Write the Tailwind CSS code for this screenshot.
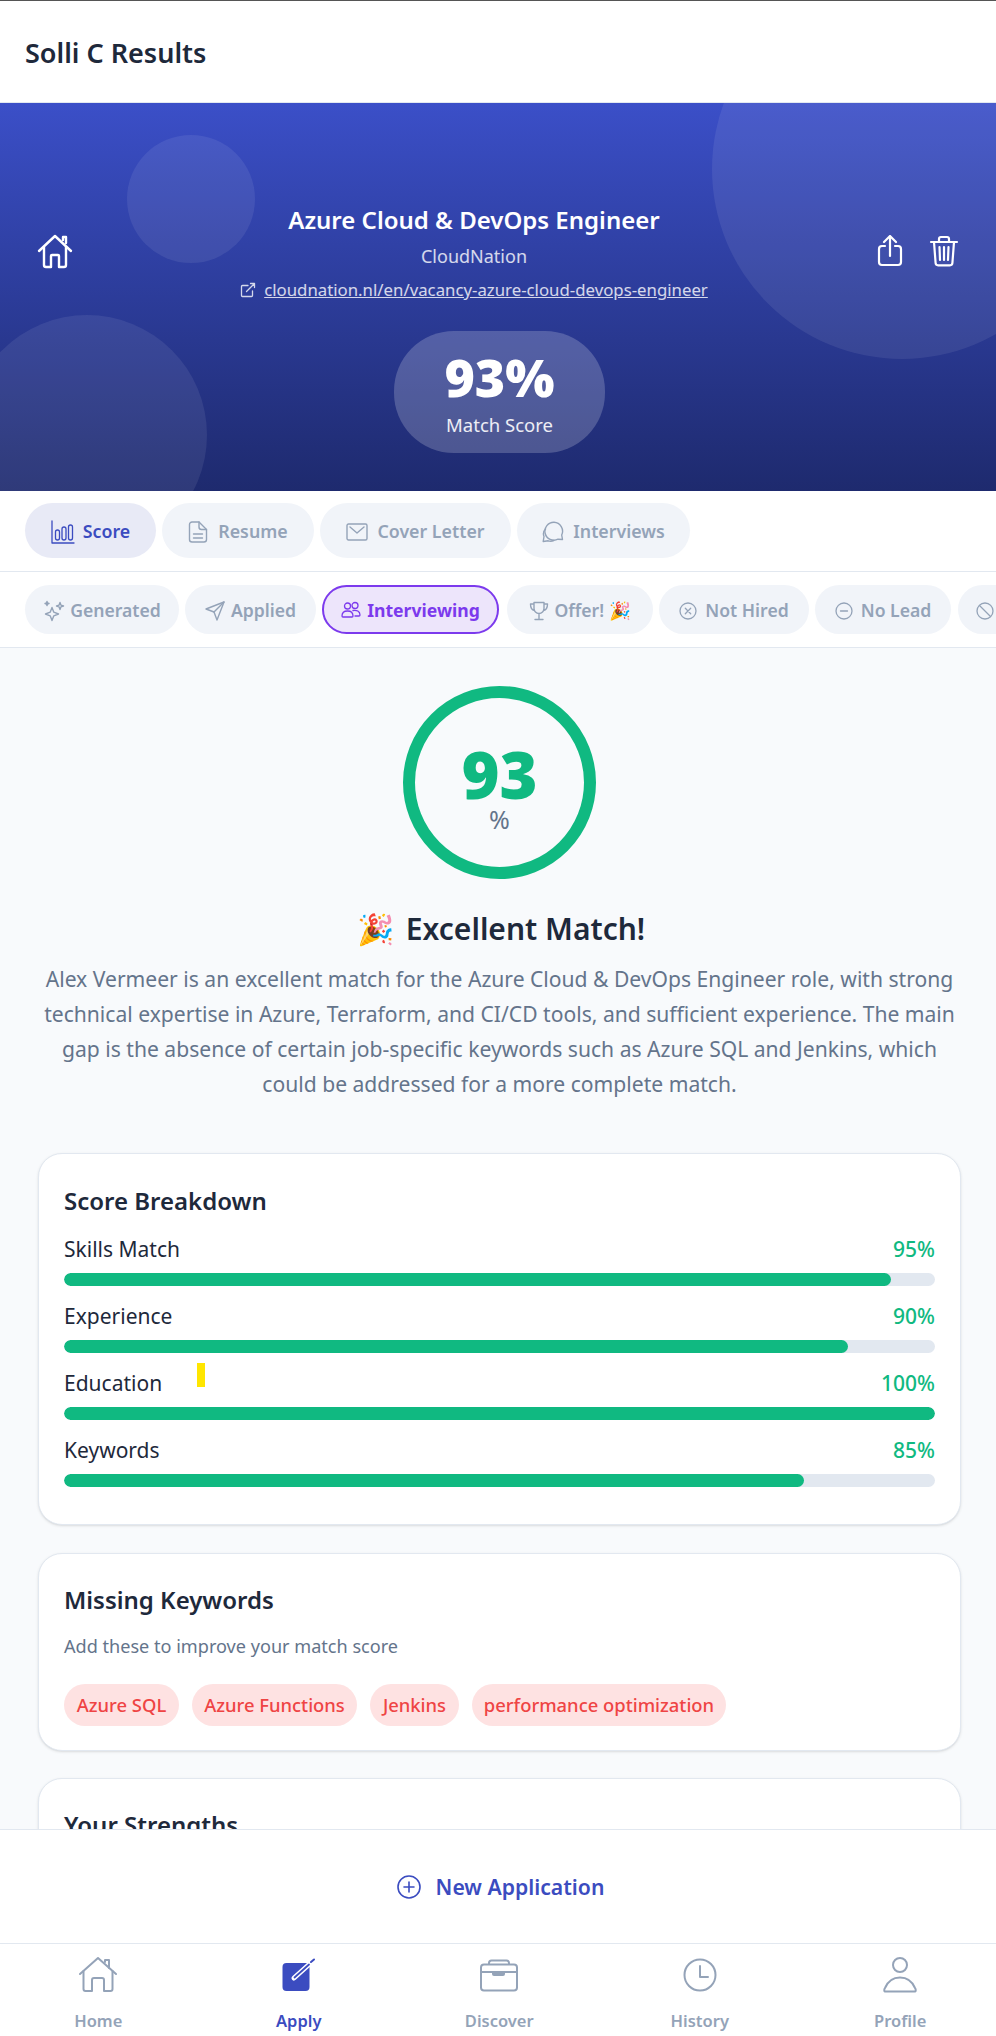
<!DOCTYPE html>
<html lang="en">
<head>
<meta charset="utf-8">
<title>Solli C Results</title>
<script src="https://cdn.jsdelivr.net/npm/@tailwindcss/browser@4"></script>
</head>
<body class="bg-white">
<div class="relative flex flex-col h-[2036px] w-[996px] overflow-hidden bg-[#f8fafc] font-['Noto_Sans',sans-serif] text-[#1e293b]">

  <header class="shrink-0 h-[103px] bg-white border-t border-t-[#555] border-b border-b-[#e2e8f0] flex items-center pl-[25px] pt-[2px]">
    <h1 class="text-[27px] font-semibold leading-none text-[#1e293b]">Solli C Results</h1>
  </header>

  <section class="relative shrink-0 h-[388px] overflow-hidden bg-gradient-to-b from-[#3b4fc8] to-[#1e2a6e] text-white">
    <div class="absolute w-[380px] h-[380px] left-[712px] top-[-124px] rounded-full bg-white/[0.08]"></div>
    <div class="absolute w-[128px] h-[128px] left-[127px] top-[32px] rounded-full bg-white/[0.08]"></div>
    <div class="absolute w-[240px] h-[240px] left-[-33px] top-[212px] rounded-full bg-white/[0.08]"></div>
    <div class="relative pt-[100px] px-[36px] flex items-center h-[200px]">
      <svg class="w-[38px] h-[38px] shrink-0 -mt-[5px]" viewBox="0 0 38 38" fill="none" stroke="currentColor" stroke-width="2.4" stroke-linecap="round" stroke-linejoin="round"><path d="M3 19 19 4l16 15"/><path d="M8 15v18a2 2 0 0 0 2 2h5V24a1 1 0 0 1 1-1h6a1 1 0 0 1 1 1v11h5a2 2 0 0 0 2-2V15"/><path d="M27 8V5h3v6"/></svg>
      <div class="flex-1 min-w-0 text-center">
        <h2 class="text-[24px] leading-[30px] font-semibold">Azure Cloud &amp; DevOps Engineer</h2>
        <p class="mt-[9px] text-[18px] leading-[24px] text-white/80">CloudNation</p>
        <p class="mt-[11px] flex items-center justify-center gap-[8px] text-[16.800px] leading-[22px] text-white/80">
          <svg class="w-[16px] h-[16px]" viewBox="0 0 16 16" fill="none" stroke="currentColor" stroke-width="1.3" stroke-linecap="round" stroke-linejoin="round"><path d="M12.5 9v4.5a1 1 0 0 1-1 1h-9a1 1 0 0 1-1-1v-9a1 1 0 0 1 1-1H8"/><path d="M6.5 9.5 14.5 1.5M10.5 1.5h4v4"/></svg>
          <span class="underline">cloudnation.nl/en/vacancy-azure-cloud-devops-engineer</span>
        </p>
      </div>
      <div class="flex shrink-0 gap-[22px] -mt-[5px]">
        <svg class="w-[32px] h-[32px]" viewBox="0 0 32 32" fill="none" stroke="currentColor" stroke-width="2.2" stroke-linecap="round" stroke-linejoin="round"><path d="M11 11H8a3 3 0 0 0-3 3v13a3 3 0 0 0 3 3h16a3 3 0 0 0 3-3V14a3 3 0 0 0-3-3h-3"/><path d="M16 21V2M10 7l6-6 6 6"/></svg>
        <svg class="w-[32px] h-[32px]" viewBox="0 0 32 32" fill="none" stroke="currentColor" stroke-width="2.2" stroke-linecap="round" stroke-linejoin="round"><path d="M3 7h26M6 7l1.600 21a2.500 2.500 0 0 0 2.500 2.300h11.800a2.500 2.500 0 0 0 2.500-2.300L26 7"/><path d="M11 7V4a2 2 0 0 1 2-2h6a2 2 0 0 1 2 2v3M11.500 12l.5 13M16 12v13M20.500 12l-.5 13"/></svg>
      </div>
    </div>
    <div class="relative ml-[394px] mt-[28px] w-[211px] h-[122px] rounded-[60px] bg-white/20 flex flex-col items-center justify-center">
      <div class="text-[52px] leading-[60px] font-black">93%</div>
      <div class="mt-[6px] text-[18.500px] leading-[24px] text-white/90">Match Score</div>
    </div>
  </section>

  <nav class="shrink-0 h-[81px] bg-white border-b border-[#e2e8f0] px-[25px] flex items-center gap-[6px] pb-[1px] text-[17.800px] font-semibold text-[#94a3b8]">
    <div class="w-[131px] h-[55px] pt-[2px] rounded-full bg-[#e8eaf6] text-[#3b4cc0] flex items-center justify-center gap-[8px]">
      <svg class="w-[24px] h-[24px]" viewBox="0 0 24 24" fill="none" stroke="currentColor" stroke-width="1.300" stroke-linecap="round" stroke-linejoin="round"><path d="M1 1v22h22"/><rect x="4.500" y="10" width="4" height="10" rx="2"/><rect x="11" y="7" width="4" height="13" rx="2"/><rect x="17.500" y="5" width="4" height="15" rx="2"/></svg>
      <span>Score</span>
    </div>
    <div class="w-[152px] h-[55px] pt-[2px] rounded-full bg-[#f1f4f9] flex items-center justify-center gap-[10px]">
      <svg class="w-[20px] h-[24px]" viewBox="0 0 20 24" fill="none" stroke="currentColor" stroke-width="1.400" stroke-linecap="round" stroke-linejoin="round"><path d="M11 2H4a2.500 2.500 0 0 0-2.500 2.500v15A2.500 2.500 0 0 0 4 22h12a2.500 2.500 0 0 0 2.500-2.500V9.500z"/><path d="M11 2v5a2.500 2.500 0 0 0 2.500 2.500h5M5.500 14h9M5.500 18h9"/></svg>
      <span>Resume</span>
    </div>
    <div class="w-[191px] h-[55px] pt-[2px] rounded-full bg-[#f1f4f9] flex items-center justify-center gap-[9px]">
      <svg class="w-[22px] h-[18px]" viewBox="0 0 22 18" fill="none" stroke="currentColor" stroke-width="1.400" stroke-linecap="round" stroke-linejoin="round"><rect x="1" y="1" width="20" height="16" rx="1.500"/><path d="m4 4 7 6 7-6"/></svg>
      <span>Cover Letter</span>
    </div>
    <div class="w-[173px] h-[55px] pt-[2px] rounded-full bg-[#f1f4f9] flex items-center justify-center gap-[9px]">
      <svg class="w-[22px] h-[22px]" viewBox="0 0 22 22" fill="none" stroke="currentColor" stroke-width="1.400" stroke-linecap="round" stroke-linejoin="round"><path d="M12 1.200a9 9 0 1 0 4 17l4.500.3-.8-4.500A9 9 0 0 0 12 1.200z"/><path d="M3.500 8A7 7 0 0 0 2 15.500l-.8 5 5-.7a7 7 0 0 0 5.500-.3"/></svg>
      <span>Interviews</span>
    </div>
  </nav>

  <nav class="shrink-0 h-[76px] bg-white border-b border-[#e2e8f0] pl-[25px] flex items-center gap-[6px] overflow-hidden text-[17.600px] font-semibold text-[#94a3b8] whitespace-nowrap">
    <div class="shrink-0 w-[154px] h-[49px] pt-[2px] rounded-full bg-[#f1f4f9] flex items-center justify-center gap-[5px]">
      <svg class="w-[22px] h-[22px]" viewBox="0 0 22 22" fill="none" stroke="currentColor" stroke-width="1.400" stroke-linecap="round" stroke-linejoin="round"><path d="M9 7.500 10.800 12.200 15.500 14 10.800 15.800 9 20.500 7.200 15.800 2.500 14 7.200 12.200z"/><path d="M17 2.500l.9 2.600 2.600.9-2.600.9-.9 2.600-.9-2.600-2.600-.9 2.600-.9zM4 1.500l.5 1.500L6 3.500 4.500 4 4 5.500 3.500 4 2 3.500 3.500 3z"/></svg>
      <span>Generated</span>
    </div>
    <div class="shrink-0 w-[131px] h-[49px] pt-[2px] rounded-full bg-[#f1f4f9] flex items-center justify-center gap-[6px]">
      <svg class="w-[20px] h-[20px]" viewBox="0 0 20 20" fill="none" stroke="currentColor" stroke-width="1.400" stroke-linecap="round" stroke-linejoin="round"><path d="M1 8 19 1l-7 18-3-8z"/><path d="M9 11 19 1"/></svg>
      <span>Applied</span>
    </div>
    <div class="shrink-0 w-[177px] h-[49px] pt-[1px] rounded-full bg-[#ede5fb] border-2 border-[#7c3aed] text-[#7c3aed] flex items-center justify-center gap-[6px] font-bold">
      <svg class="w-[20px] h-[18px]" viewBox="0 0 20 18" fill="none" stroke="currentColor" stroke-width="1.300" stroke-linecap="round" stroke-linejoin="round"><circle cx="6.500" cy="5" r="3"/><circle cx="14" cy="4.500" r="3"/><path d="M1 15c0-3.500 2.500-5 5.500-5s5.500 1.500 5.500 5c0 .6-.4 1-1 1H2c-.6 0-1-.4-1-1z"/><path d="M12 9.500c3.500-.8 7 .8 7 4.500 0 .6-.4 1-1 1h-4"/></svg>
      <span>Interviewing</span>
    </div>
    <div class="shrink-0 ml-[2px] w-[146px] h-[49px] pt-[2px] rounded-full bg-[#f1f4f9] flex items-center justify-center gap-[5px]">
      <svg class="w-[20px] h-[20px]" viewBox="0 0 20 20" fill="none" stroke="currentColor" stroke-width="1.400" stroke-linecap="round" stroke-linejoin="round"><path d="M5 1.500h10v6a5 5 0 0 1-10 0zM5 3H1.500c0 4 1 6 4 6.500M15 3h3.500c0 4-1 6-4 6.500M10 12.500v5M6 18.500h8"/></svg>
      <span>Offer!&nbsp;🎉</span>
    </div>
    <div class="shrink-0 w-[150px] h-[49px] pt-[2px] rounded-full bg-[#f1f4f9] flex items-center justify-center gap-[8px]">
      <svg class="w-[18px] h-[18px]" viewBox="0 0 18 18" fill="none" stroke="currentColor" stroke-width="1.300" stroke-linecap="round" stroke-linejoin="round"><circle cx="9" cy="9" r="8"/><path d="m6.300 6.300 5.400 5.400m0-5.400-5.400 5.400"/></svg>
      <span>Not Hired</span>
    </div>
    <div class="shrink-0 w-[136px] h-[49px] pt-[2px] rounded-full bg-[#f1f4f9] flex items-center justify-center gap-[8px]">
      <svg class="w-[18px] h-[18px]" viewBox="0 0 18 18" fill="none" stroke="currentColor" stroke-width="1.300" stroke-linecap="round" stroke-linejoin="round"><circle cx="9" cy="9" r="8"/><path d="M5.500 9h7"/></svg>
      <span>No Lead</span>
    </div>
    <div class="shrink-0 ml-[1px] w-[120px] h-[49px] pt-[2px] rounded-full bg-[#f1f4f9] flex items-center pl-[18px] gap-[8px]">
      <svg class="w-[18px] h-[18px]" viewBox="0 0 18 18" fill="none" stroke="currentColor" stroke-width="1.300" stroke-linecap="round" stroke-linejoin="round"><circle cx="9" cy="9" r="8"/><path d="m3.500 3.500 11 11"/></svg>
    </div>
  </nav>

  <main class="flex-1 min-h-0 overflow-hidden pl-[38px] pr-[35px] pt-[38px]">
    <div class="mx-auto w-[193px] h-[193px] rounded-full border-[12px] border-[#10b981] flex flex-col items-center justify-center pt-[11px]">
      <div class="text-[65px] leading-[62px] font-black text-[#10b981]">93</div>
      <div class="text-[25px] leading-[28px] text-[#64748b]">%</div>
    </div>
    <h3 class="mt-[30px] pl-[3px] flex items-center justify-center gap-[12px] text-[30px] leading-[40px] font-semibold text-[#1e293b]"><span>🎉</span><span>Excellent Match!</span></h3>
    <p class="mt-[12px] text-center text-[21.100px] leading-[35px] text-[#64748b]">Alex Vermeer is an excellent match for the Azure Cloud &amp; DevOps Engineer role, with strong technical expertise in Azure, Terraform, and CI/CD tools, and sufficient experience. The main gap is the absence of certain job-specific keywords such as Azure SQL and Jenkins, which could be addressed for a more complete match.</p>

    <div class="mt-[52px] h-[372px] rounded-[24px] bg-white border border-[#e2e8f0] shadow-sm px-[25px] pt-[30px]">
      <h4 class="text-[24px] leading-[34px] font-semibold">Score Breakdown</h4>
      <div class="mt-[14px] flex flex-col gap-[13px] text-[21px] leading-[34px]">
        <div>
          <div class="flex justify-between"><span>Skills Match</span><span class="font-medium text-[#10b981]">95%</span></div>
          <div class="mt-[7px] h-[13px] rounded-full bg-[#e2e8f0] overflow-hidden"><div class="h-full rounded-full bg-[#10b981]" style="width:95%"></div></div>
        </div>
        <div>
          <div class="flex justify-between"><span>Experience</span><span class="font-medium text-[#10b981]">90%</span></div>
          <div class="mt-[7px] h-[13px] rounded-full bg-[#e2e8f0] overflow-hidden"><div class="h-full rounded-full bg-[#10b981]" style="width:90%"></div></div>
        </div>
        <div>
          <div class="flex justify-between"><span>Education</span><span class="font-medium text-[#10b981]">100%</span></div>
          <div class="mt-[7px] h-[13px] rounded-full bg-[#e2e8f0] overflow-hidden"><div class="h-full rounded-full bg-[#10b981]" style="width:100%"></div></div>
        </div>
        <div>
          <div class="flex justify-between"><span>Keywords</span><span class="font-medium text-[#10b981]">85%</span></div>
          <div class="mt-[7px] h-[13px] rounded-full bg-[#e2e8f0] overflow-hidden"><div class="h-full rounded-full bg-[#10b981]" style="width:85%"></div></div>
        </div>
      </div>
    </div>

    <div class="mt-[28px] h-[198px] rounded-[24px] bg-white border border-[#e2e8f0] shadow-sm px-[25px] pt-[29px]">
      <h4 class="text-[24px] leading-[34px] font-semibold">Missing Keywords</h4>
      <p class="mt-[17px] text-[18.100px] leading-[24px] text-[#64748b]">Add these to improve your match score</p>
      <div class="mt-[26px] flex gap-[13px] text-[18.400px] font-medium text-[#ef4444]">
        <span class="w-[115px] h-[42px] rounded-full bg-[#fee2e2] flex items-center justify-center">Azure SQL</span>
        <span class="w-[165px] h-[42px] rounded-full bg-[#fee2e2] flex items-center justify-center">Azure Functions</span>
        <span class="w-[89px] h-[42px] rounded-full bg-[#fee2e2] flex items-center justify-center">Jenkins</span>
        <span class="w-[254px] h-[42px] rounded-full bg-[#fee2e2] flex items-center justify-center">performance optimization</span>
      </div>
    </div>

    <div class="mt-[27px] h-[200px] rounded-[24px] bg-white border border-[#e2e8f0] shadow-sm px-[25px] pt-[29px]">
      <h4 class="text-[24px] leading-[34px] font-semibold">Your Strengths</h4>
    </div>
  </main>

  <div class="shrink-0 h-[114px] bg-white border-t border-[#e2e8f0] flex items-center justify-center gap-[15px] pl-[5px] text-[#3b4cc0] text-[21.200px] font-semibold">
    <svg class="w-[24px] h-[24px]" viewBox="0 0 24 24" fill="none" stroke="currentColor" stroke-width="1.600" stroke-linecap="round"><circle cx="12" cy="12" r="11"/><path d="M12 7v10M7 12h10"/></svg>
    <span>New Application</span>
  </div>

  <footer class="shrink-0 h-[93px] bg-white border-t border-[#e2e8f0] -ml-[2px] grid grid-cols-[repeat(5,200.500px)] text-[16.500px] font-semibold text-[#94a3b8]">
    <div class="flex flex-col items-center pt-[13px]">
      <svg class="w-[38px] h-[36px]" viewBox="0 0 38 36" fill="none" stroke="currentColor" stroke-width="2" stroke-linecap="round" stroke-linejoin="round"><path d="M1 17 19 1l18 16"/><path d="M4.500 14v18a2 2 0 0 0 2 2H13V23a2 2 0 0 1 2-2h8a2 2 0 0 1 2 2v11h6.500a2 2 0 0 0 2-2V14"/><path d="M26 5V3h4v8"/></svg>
      <span class="mt-[17px] leading-[22px]">Home</span>
    </div>
    <div class="flex flex-col items-center pt-[13px] text-[#3b4cc0]">
      <svg class="w-[36px] h-[36px]" viewBox="0 0 36 36" fill="none" stroke-linecap="round"><rect x="1.500" y="6" width="27" height="28" rx="4" fill="currentColor"/><path d="M13 21 28 7.500" stroke="#fff" stroke-width="5"/><path d="M13.500 20.500 28 7.500" stroke="currentColor" stroke-width="1.800"/><path d="M30 5 33 2.500" stroke="currentColor" stroke-width="2"/></svg>
      <span class="mt-[17px] leading-[22px]">Apply</span>
    </div>
    <div class="flex flex-col items-center pt-[13px]">
      <svg class="w-[38px] h-[36px]" viewBox="0 0 38 36" fill="none" stroke="currentColor" stroke-width="2" stroke-linejoin="round"><rect x="1" y="7.500" width="36" height="26" rx="3"/><path d="M9 7.500V6a2.500 2.500 0 0 1 2.500-2.500h15A2.500 2.500 0 0 1 29 6v1.500M1 15h36"/><path d="M12 15h13v2a2 2 0 0 1-2 2h-9a2 2 0 0 1-2-2z" fill="currentColor" stroke="none"/></svg>
      <span class="mt-[17px] leading-[22px]">Discover</span>
    </div>
    <div class="flex flex-col items-center pt-[13px]">
      <svg class="w-[36px] h-[36px]" viewBox="0 0 36 36" fill="none" stroke="currentColor" stroke-width="2" stroke-linecap="round" stroke-linejoin="round"><circle cx="18" cy="18" r="15.500"/><path d="M18 9v11h8"/></svg>
      <span class="mt-[17px] leading-[22px]">History</span>
    </div>
    <div class="flex flex-col items-center pt-[13px]">
      <svg class="w-[36px] h-[36px]" viewBox="0 0 36 36" fill="none" stroke="currentColor" stroke-width="2" stroke-linecap="round" stroke-linejoin="round"><circle cx="18" cy="8" r="7"/><path d="M3 34.500c-1-.5-1-2 0-3.500C6 24 12 20.500 18 20.500S30 24 33 31c1 1.500 1 3 0 3.500z"/></svg>
      <span class="mt-[17px] leading-[22px]">Profile</span>
    </div>
  </footer>

  <div class="absolute left-[197px] top-[1363px] w-[8px] h-[24px] bg-[#ffe600]"></div>
</div>
</body>
</html>
